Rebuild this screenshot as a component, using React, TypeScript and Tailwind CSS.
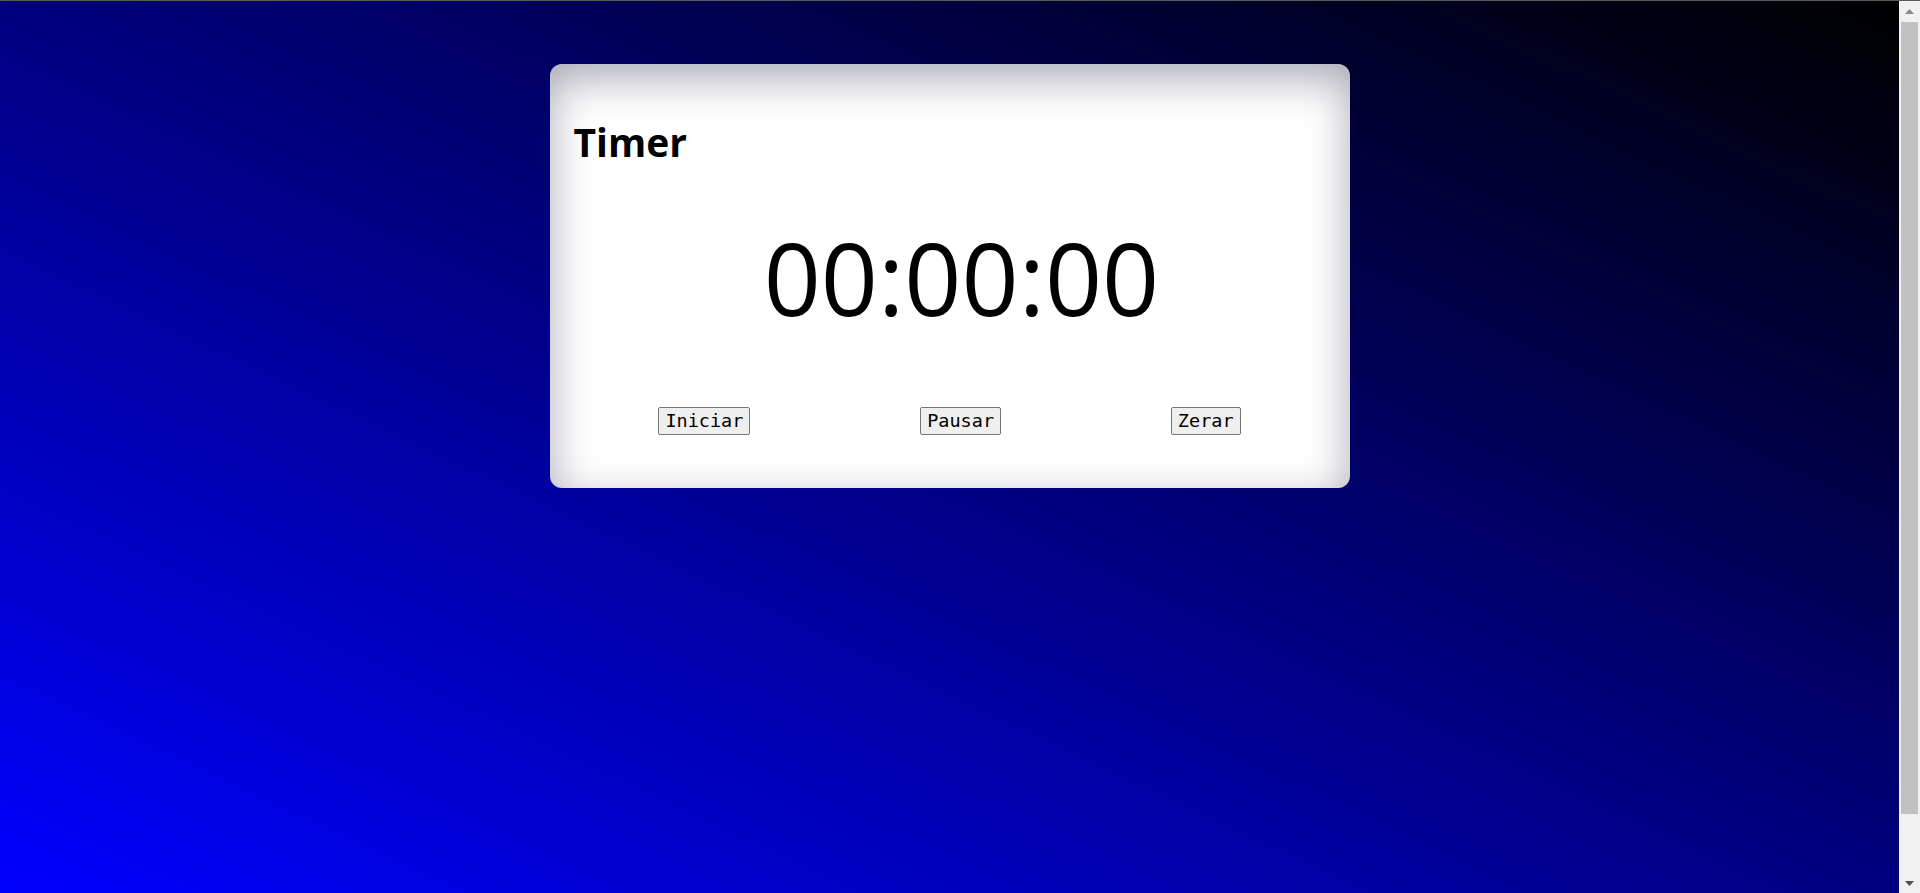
import React from "react";

function Btn({ label }: { label: string }) {
  return (
    <button className="h-[28px] rounded-[2px] border border-[#767676] bg-[#efefef] px-[6px] font-['DejaVu_Sans_Mono',monospace] text-[18.5px] leading-[24px] text-black">
      {label}
    </button>
  );
}

export default function App() {
  return (
    <div className="flex h-[893px] w-full overflow-hidden border-t border-[#5a5a5a]">
      <div className="h-full flex-1 bg-[linear-gradient(to_top_right,#0000ff,#000000)]">
        <div className="mx-auto mt-[63px] flex h-[424px] w-[800px] flex-col rounded-[12px] bg-white px-[24px] shadow-[inset_0_14px_44px_rgba(0,0,40,0.34)]">
          <h1 className="mt-[54px] text-[39px] font-bold leading-[48px] text-black font-['Open_Sans',sans-serif]">
            Timer
          </h1>
          <div className="mt-[46px] pl-[24px] text-center text-[100px] leading-[130px] text-black font-['Open_Sans',sans-serif]">
            00:00:00
          </div>
          <div className="mt-[65px] flex justify-around">
            <Btn label="Iniciar" />
            <Btn label="Pausar" />
            <Btn label="Zerar" />
          </div>
        </div>
      </div>
      <div className="flex h-full w-[21px] flex-col items-center bg-[#f1f1f1]">
        <div className="flex h-[20px] w-full items-center justify-center">
          <svg width="9" height="5" viewBox="0 0 9 5">
            <polygon points="4.5,0 9,5 0,5" fill="#8c8c8c" />
          </svg>
        </div>
        <div className="mt-[1px] h-[792px] w-[17px] bg-[#c1c1c1]" />
        <div className="flex-1" />
        <div className="flex h-[20px] w-full items-center justify-center">
          <svg width="9" height="5" viewBox="0 0 9 5">
            <polygon points="0,0 9,0 4.5,5" fill="#505050" />
          </svg>
        </div>
      </div>
    </div>
  );
}
